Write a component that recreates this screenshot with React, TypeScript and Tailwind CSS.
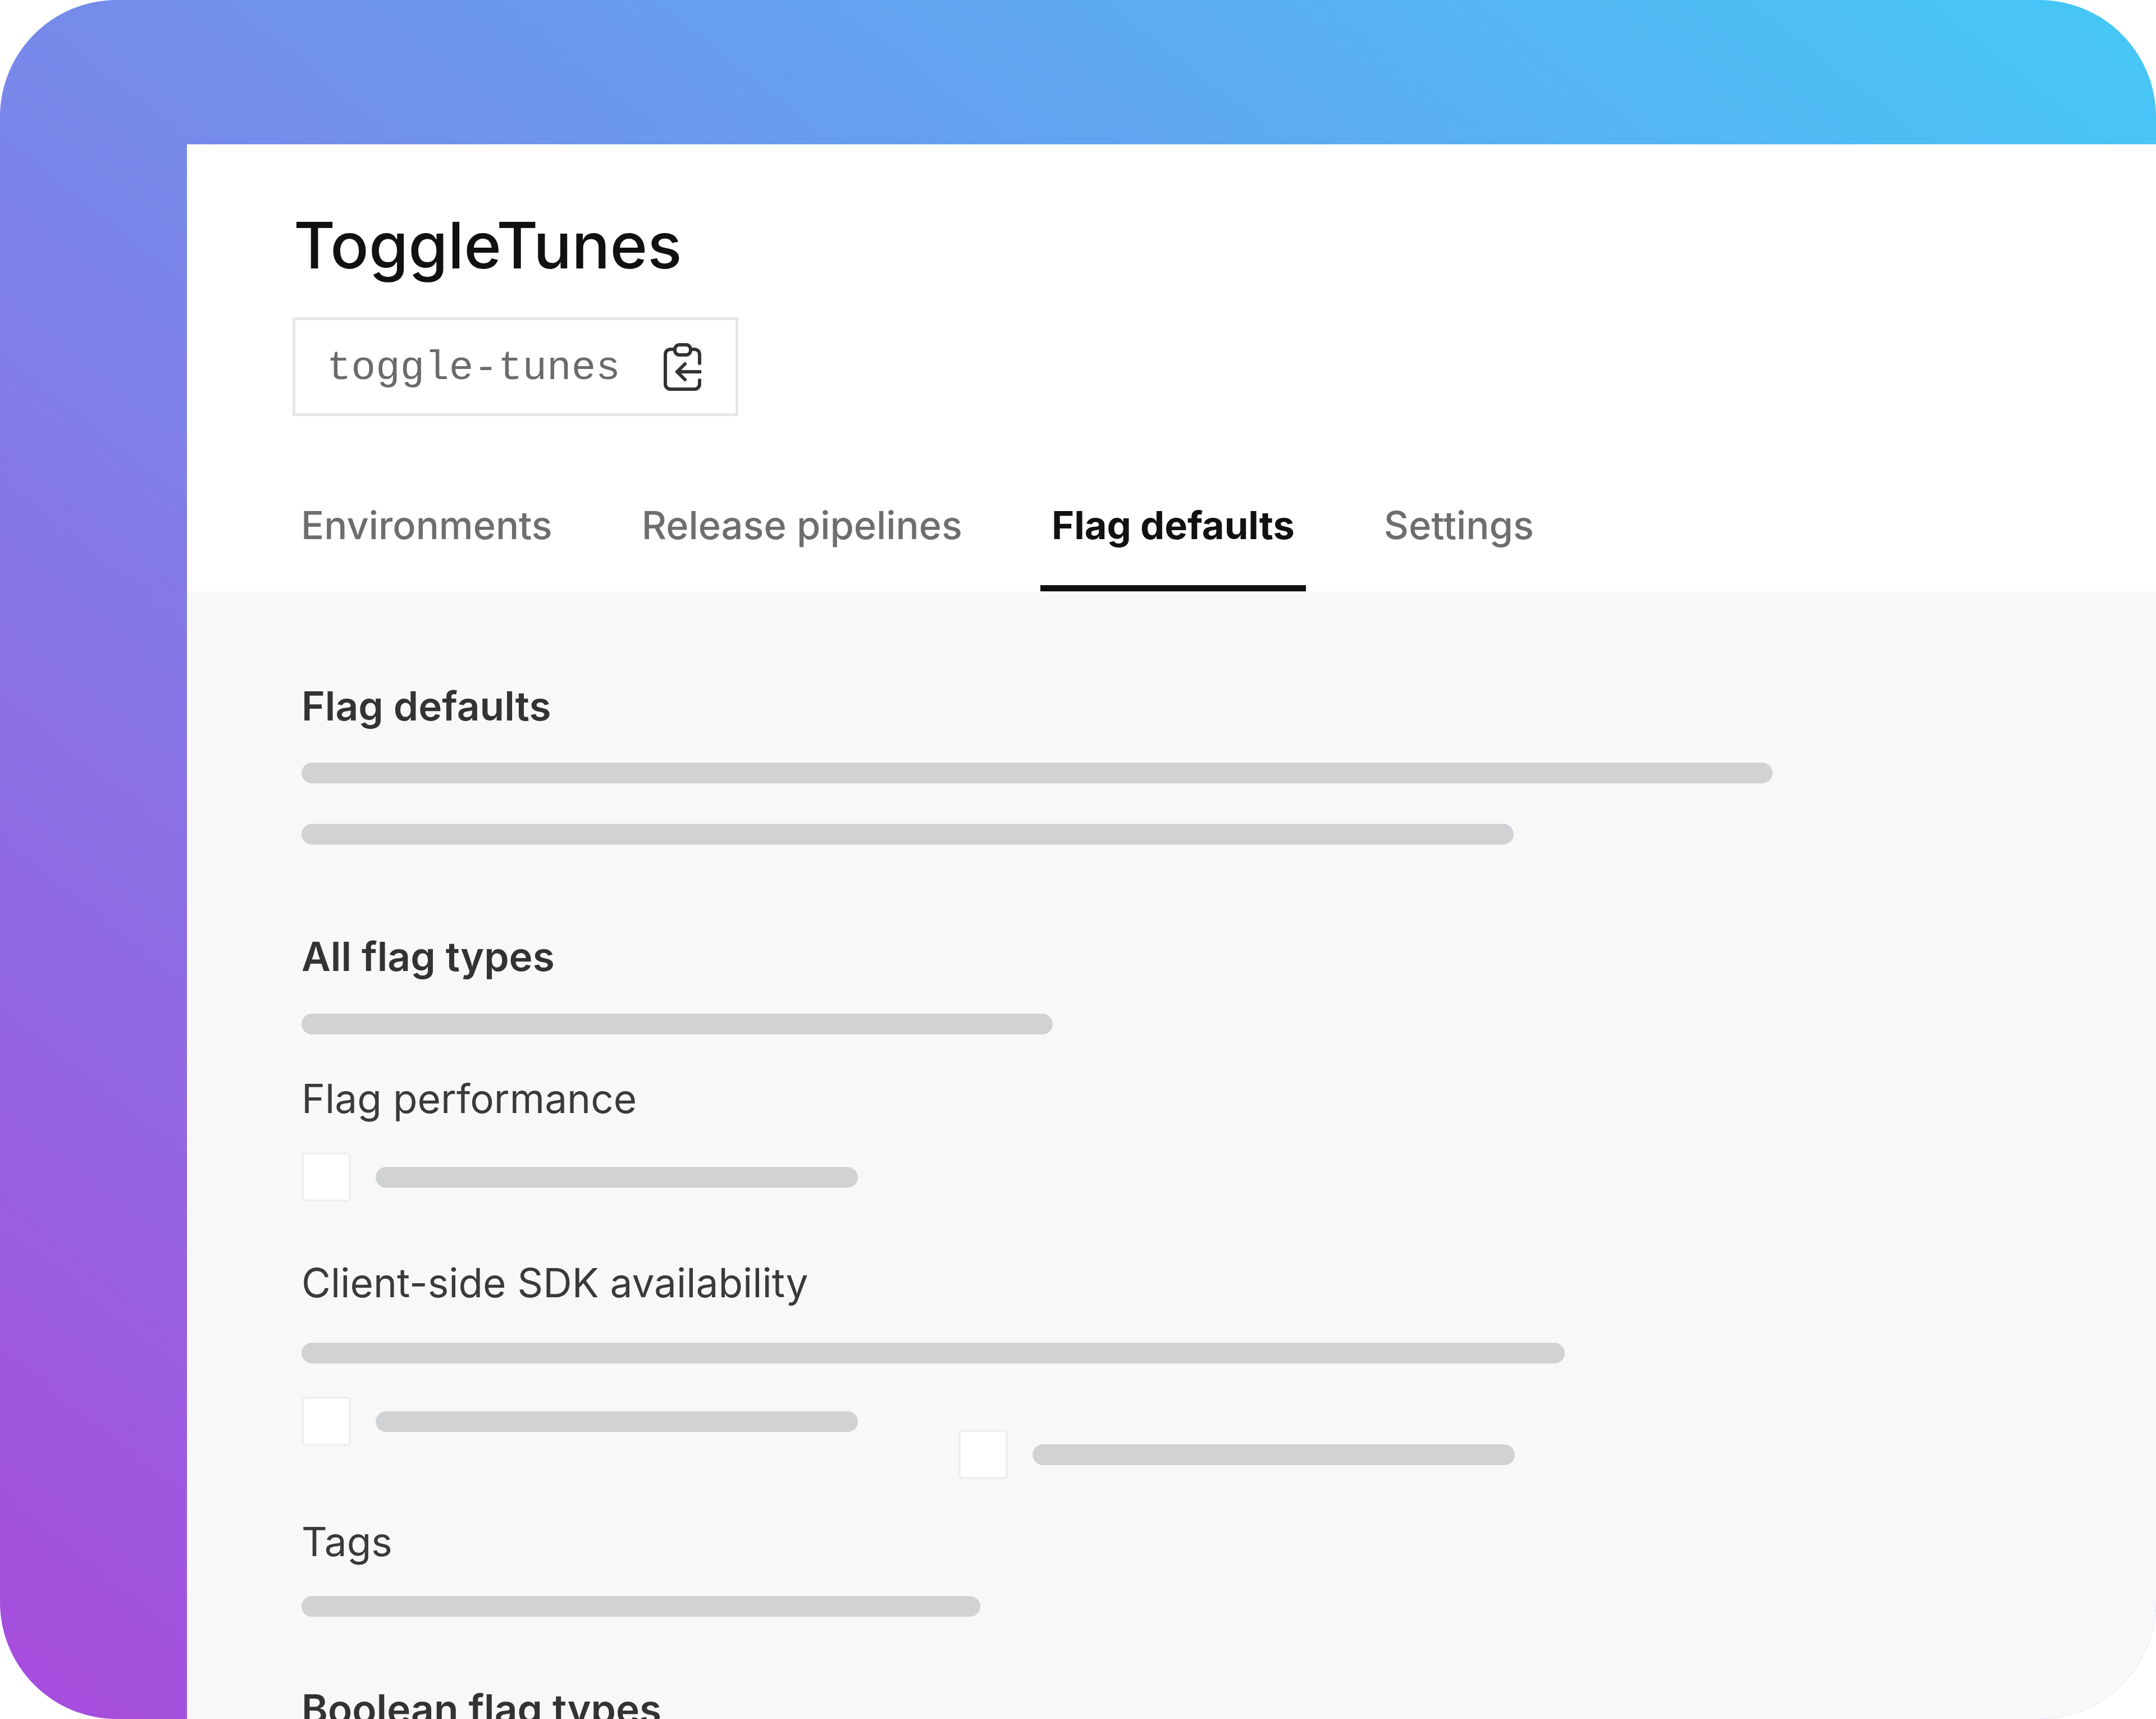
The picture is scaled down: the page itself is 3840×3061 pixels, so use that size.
const inter = "font-['Inter',sans-serif]";

function Bar({ className }: { className: string }) {
  return <div className={`h-[37px] rounded-full bg-[#d1d2d4] ${className}`} />;
}

function CheckRow({ className = "" }: { className?: string }) {
  return (
    <div className={`flex items-center gap-[44px] ${className}`}>
      <div className="h-[88px] w-[88px] rounded-[8px] border-[4px] border-[#efefef] bg-white" />
      <Bar className="w-[859px]" />
    </div>
  );
}

function Icon() {
  return (
    <svg viewBox="0 0 67 85" className="h-[85px] w-[67px]" fill="none" stroke="#333333" strokeWidth="6" strokeLinecap="round" strokeLinejoin="round">
      <rect x="20" y="3" width="28" height="18" rx="8" />
      <path d="M20 11h-8a9 9 0 0 0-9 9v53a9 9 0 0 0 9 9h43a9 9 0 0 0 9-9v-7" />
      <path d="M48 11h7a9 9 0 0 1 9 9v16" />
      <path d="M66 51H24" />
      <path d="M38 37 24 51l14 14" />
    </svg>
  );
}

function Tab({ label, active = false }: { label: string; active?: boolean }) {
  return (
    <div className={`h-[165px] border-b-[11px] px-[20px] text-[68.5px] leading-[96px] ${active ? "border-[#111111] font-bold text-[#111111]" : "border-transparent font-medium text-[#6e6e6e]"}`}>
      {label}
    </div>
  );
}

export default function App() {
  return (
    <div className={`h-[3061px] w-[3840px] overflow-hidden bg-white ${inter}`}>
      <div className="h-[3061px] w-[3840px] overflow-hidden rounded-[208px] bg-[linear-gradient(to_top_right,#a84bdc,#45c9f7)] pl-[333px] pt-[257px]">
        <div className="h-[2804px] bg-[#f8f8f8]">
          <header className="flex h-[796px] flex-col bg-white">
            <div className="pl-[190px] pt-[112px]">
              <h1 className="text-[113.6px] font-medium leading-[136px] text-[#111111]">ToggleTunes</h1>
            </div>
            <div className="ml-[188px] mt-[60px] flex h-[176px] w-[794px] items-center justify-between border-[5px] border-[#e6e6e6] pl-[56px] pr-[61px]">
              <span className="translate-y-[3px] font-['Liberation_Mono',monospace] text-[72.6px] leading-none text-[#6b6b6b]">toggle-tunes</span>
              <Icon />
            </div>
            <nav className="ml-[183px] mt-auto flex gap-[119px]">
              <Tab label="Environments" />
              <Tab label="Release pipelines" />
              <Tab label="Flag defaults" active />
              <Tab label="Settings" />
            </nav>
          </header>
          <section className="pl-[204px] pt-[156px]">
            <h2 className="text-[71.2px] font-semibold leading-[96px] text-[#333333]">Flag defaults</h2>
            <Bar className="mt-[53px] w-[2620px]" />
            <Bar className="mt-[72px] w-[2159px]" />
            <h2 className="mt-[151px] text-[71.2px] font-semibold leading-[96px] text-[#333333]">All flag types</h2>
            <Bar className="mt-[54px] w-[1338px]" />
            <p className="mt-[66px] text-[71.2px] leading-[96px] text-[#3a3a3a]">Flag performance</p>
            <CheckRow className="mt-[48px]" />
            <p className="mt-[96px] text-[71.2px] leading-[96px] text-[#3a3a3a]">Client-side SDK availability</p>
            <Bar className="mt-[59px] w-[2250px]" />
            <div className="mt-[59px] flex items-start gap-[179px]">
              <CheckRow />
              <CheckRow className="mt-[59px]" />
            </div>
            <p className="mt-[63px] text-[71.2px] leading-[96px] text-[#3a3a3a]">Tags</p>
            <Bar className="mt-[49px] w-[1209px]" />
            <h2 className="mt-[116px] text-[71.2px] font-semibold leading-[96px] text-[#333333]">Boolean flag types</h2>
          </section>
        </div>
      </div>
    </div>
  );
}
